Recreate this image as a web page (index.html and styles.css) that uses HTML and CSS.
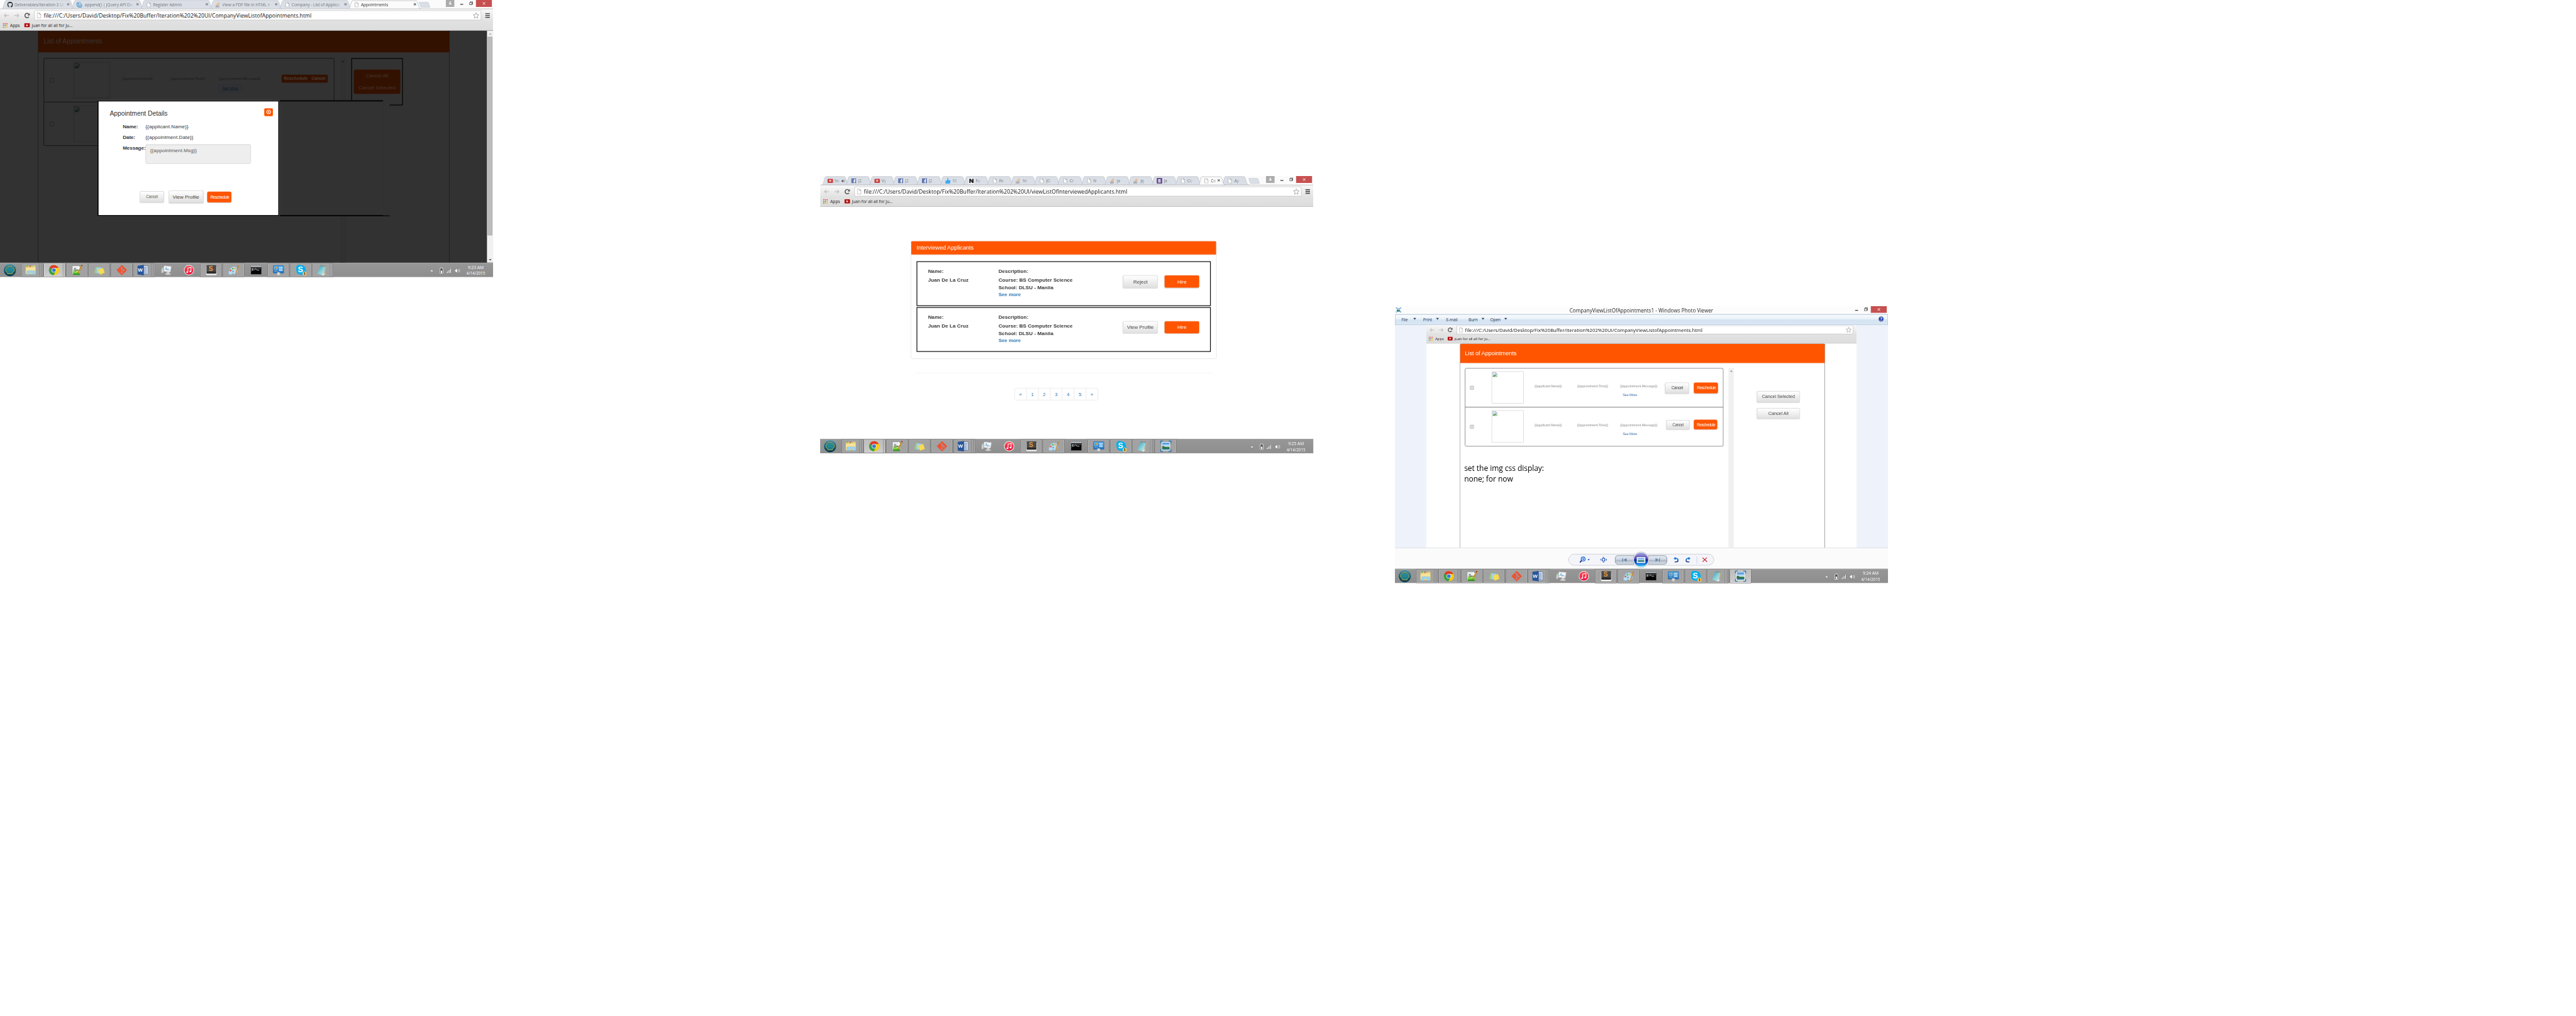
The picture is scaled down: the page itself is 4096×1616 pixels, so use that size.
FILE: index.html
```html
<!DOCTYPE html>
<html lang="en">
<head>
<meta charset="utf-8">
<title>Appointments screens</title>
<link rel="stylesheet" href="styles.css">
</head>
<body>
<svg class="defs" width="0" height="0" aria-hidden="true">
  <defs>
    <linearGradient id="gOrb" x1="0" y1="0" x2="0" y2="1"><stop offset="0" stop-color="#5b97a8"/><stop offset=".5" stop-color="#135a70"/><stop offset="1" stop-color="#062f42"/></linearGradient>
    <linearGradient id="gNpp" x1="0" y1="0" x2="0" y2="1"><stop offset="0" stop-color="#f4ffe8"/><stop offset=".5" stop-color="#8ee24a"/><stop offset="1" stop-color="#128a12"/></linearGradient>
    <linearGradient id="gBlue" x1="0" y1="0" x2="0" y2="1"><stop offset="0" stop-color="#4fa9ea"/><stop offset="1" stop-color="#1d6fc0"/></linearGradient>
    <linearGradient id="gRed" x1="0" y1="0" x2="0" y2="1"><stop offset="0" stop-color="#ff4e54"/><stop offset="1" stop-color="#e8143f"/></linearGradient>
    <linearGradient id="gNote" x1="0" y1="0" x2="1" y2="1"><stop offset="0" stop-color="#2f97ab"/><stop offset=".55" stop-color="#8fd0da"/><stop offset="1" stop-color="#d8f2f5"/></linearGradient>
    <linearGradient id="gPlay" x1="0" y1="0" x2="0" y2="1"><stop offset="0" stop-color="#a9a6dc"/><stop offset=".45" stop-color="#4a43b0"/><stop offset=".5" stop-color="#0a1a8f"/><stop offset=".75" stop-color="#0a63d0"/><stop offset="1" stop-color="#5fe0ff"/></linearGradient>
    <linearGradient id="gRot" x1="0" y1="0" x2="0" y2="1"><stop offset="0" stop-color="#0a7be0"/><stop offset="1" stop-color="#1f2a8c"/></linearGradient>
    <linearGradient id="gSky" x1="0" y1="0" x2="0" y2="1"><stop offset="0" stop-color="#2f86d8"/><stop offset=".5" stop-color="#d5effb"/><stop offset=".62" stop-color="#4d8f5a"/><stop offset=".75" stop-color="#1d5f6a"/><stop offset="1" stop-color="#3f9fd0"/></linearGradient>
  </defs>
  <symbol id="tab-wide" viewBox="0 0 202 24"><path d="M0 23.5 Q2 23 3 20 L8 4 Q9 1.3 11.5 1.3 H186 Q189 1.3 190 4 L195 20 Q196 23.5 200 23.5 V24 H0Z"/></symbol>
  <symbol id="tab-slim" viewBox="0 0 76 24"><path d="M0 23.5 Q2 23 3 20 L7 4 Q8 1.3 11 1.3 H60 Q63 1.3 64 4 L69 20 Q70 23.5 74 23.5 V24 H0Z"/></symbol>
  <symbol id="tab-new" viewBox="0 0 32 17"><path d="M1 1.5 Q2 .6 4 .6 H24 Q26 .6 27 3 L31 14 Q31.5 16 29 16 H8 Q6 16 5 14Z" fill="#dadfe7" stroke="#c4c9cf"/></symbol>
  <symbol id="page" viewBox="0 0 12 16"><path d="M.6 1 H7.5 L11.3 5 V15.3 H.6Z M7.5 1 V5 H11.3" fill="#fbfbfb" stroke="#8f8f8f" stroke-width="1.1"/></symbol>
  <symbol id="github" viewBox="0 0 16 16"><path fill="#333" d="M8 0C3.58 0 0 3.58 0 8c0 3.54 2.29 6.53 5.47 7.59.4.07.55-.17.55-.38 0-.19-.01-.82-.01-1.49-2.01.37-2.53-.49-2.69-.94-.09-.23-.48-.94-.82-1.13-.28-.15-.68-.52-.01-.53.63-.01 1.08.58 1.23.82.72 1.21 1.87.87 2.33.66.07-.52.28-.87.51-1.07-1.78-.2-3.64-.89-3.64-3.95 0-.87.31-1.59.82-2.15-.08-.2-.36-1.02.08-2.12 0 0 .67-.21 2.2.82a7.6 7.6 0 0 1 4 0c1.53-1.04 2.2-.82 2.2-.82.44 1.1.16 1.92.08 2.12.51.56.82 1.27.82 2.15 0 3.07-1.87 3.75-3.65 3.95.29.25.54.73.54 1.48 0 1.07-.01 1.93-.01 2.2 0 .21.15.46.55.38A8.01 8.01 0 0 0 16 8c0-4.42-3.58-8-8-8z"/></symbol>
  <symbol id="jquery" viewBox="0 0 16 16"><g fill="none" stroke="#3c8fc9" stroke-linecap="round"><path d="M2.2 2.5C-1 8 2 14.8 9 15c3 0 5-1.200 6-2.500" stroke-width="2.200"/><path d="M5.500 1.500C3.500 6 6 10.800 10.500 11c2 0 3.500-1 4-2" stroke-width="1.900"/><path d="M9.500 1C8.500 4 9.500 7 12.500 7.200c1.200 0 2-.7 2.300-1.200" stroke-width="1.600"/></g></symbol>
  <symbol id="so" viewBox="0 0 14 16"><path d="M1.500 9.500V15h9V9.500" fill="none" stroke="#9a9a9a" stroke-width="1.200"/><path d="M3 13h6M3 11h6" stroke="#888" stroke-width="1.200"/><path d="M3.200 8.500l6 1M4.200 5.600l5.600 2.700M6.400 3l4.500 4.300M9.500 1l2.600 5.600" stroke="#f29a4f" stroke-width="1.300"/></symbol>
  <symbol id="yt" viewBox="0 0 16 12"><rect width="16" height="12" rx="2.200" fill="#b8120f"/><path d="M6 3v6l5-3z" fill="#fff"/></symbol>
  <symbol id="ytt" viewBox="0 0 16 12"><rect width="16" height="12" rx="2.200" fill="#cb4441"/><path d="M6 3v6l5-3z" fill="#fff"/></symbol>
  <symbol id="fb" viewBox="0 0 14 14"><path d="M0 0h14v14H0z" fill="#6076b0"/><path d="M9.800 14V8.700h1.900l.3-2.100H9.800V5.400c0-.7.300-1 1-1H12V2.300h-1.700C8.300 2.300 7.500 3.500 7.500 5.100v1.500H5.900v2.100h1.600V14z" fill="#fff"/></symbol>
  <symbol id="thumb" viewBox="0 0 14 16"><path d="M0 7.500h3.500L5.500 5V1q0-1 1.200-1T8 1.500V6h4.500Q14 6.200 13.800 8l-.8 6q-.3 1.500-1.800 1.500H0z" fill="#3da9f5"/></symbol>
  <symbol id="nine" viewBox="0 0 16 16"><path d="M0 0h16v16H0z" fill="#fff"/><path d="M2 14V2h4l4 6.500V2h4v12h-4L6 7.500V14z" fill="#222"/></symbol>
  <symbol id="boot" viewBox="0 0 16 16"><rect width="16" height="16" rx="2.500" fill="#6e5494"/><path d="M5 3.500h4a2.200 2.200 0 0 1 .8 4.200A2.500 2.500 0 0 1 9.300 12.500H5zM7 5.200v1.900h1.600a.95.95 0 0 0 0-1.900zM7 8.700v2.100h1.900a1 1 0 0 0 0-2.100z" fill="#fff" fill-rule="evenodd"/></symbol>
  <symbol id="speaker-s" viewBox="0 0 10 9"><path d="M0 3h2l3-3v9L2 6H0z" fill="#555"/><path d="M6.500 2q1.500 2.500 0 5M8.300.8q2.200 3.700 0 7.400" fill="none" stroke="#777"/></symbol>
  <symbol id="back" viewBox="0 0 15 12"><path d="M7 1L2 6l5 5M2 6h13" fill="none" stroke="#c2c2c2" stroke-width="2.200"/></symbol>
  <symbol id="fwd" viewBox="0 0 15 12"><path d="M8 1l5 5-5 5M13 6H0" fill="none" stroke="#c2c2c2" stroke-width="2.200"/></symbol>
  <symbol id="reload" viewBox="0 0 16 16"><path d="M13 11.500A6 6 0 1 1 12.500 4" fill="none" stroke="#4d4d4d" stroke-width="2.500"/><path d="M15.500 1v6.500H9z" fill="#4d4d4d"/></symbol>
  <symbol id="star" viewBox="0 0 18 18"><path d="M9 1l2.300 5.400 5.700.4-4.400 3.800 1.400 5.900L9 13.400l-5 3.100 1.400-5.900L1 6.800l5.700-.4z" fill="#fff" stroke="#888" stroke-width="1.200"/></symbol>
  <symbol id="menu" viewBox="0 0 13 14"><path d="M1 1.500h11M1 6.700h11M1 12h11" stroke="#4b4b4b" stroke-width="2.900" stroke-linecap="round"/></symbol>
  <symbol id="apps" viewBox="0 0 13 13"><path d="M0 0h3v3H0zM5 0h3v3H5zM10 0h3v3h-3z" fill="#e8453c"/><path d="M0 5h3v3H0z" fill="#2da94f"/><path d="M5 5h3v3H5z" fill="#3b78e7"/><path d="M10 5h3v3h-3z" fill="#f4b400"/><path d="M0 10h3v3H0z" fill="#2da94f"/><path d="M5 10h3v3H5zM10 10h3v3h-3z" fill="#f4b400"/></symbol>
  <symbol id="user" viewBox="0 0 24 19"><path d="M0 0h24v19H0z" fill="#ababab"/><circle cx="12" cy="6" r="2" fill="#fff"/><path d="M8 12q0-3.500 4-3.500t4 3.500z" fill="#fff"/></symbol>
  <symbol id="restore" viewBox="0 0 10 10"><path d="M.75 3.200h6.500v6H.75zM2.700 2.500V.7H9.300v7H8" fill="none" stroke="#222" stroke-width="1.300"/></symbol>
  <symbol id="close" viewBox="0 0 45 19"><path d="M0 0h45v19H0z" fill="#c75050"/><path d="M19.500 6l6.500 7M26 6l-6.500 7" stroke="#fff" stroke-width="1.600"/></symbol>
  <symbol id="broken" viewBox="0 0 16 16"><path d="M.5 .5h9L15.500 6v4L12 13l-2 2.500H.5z" fill="#c5d5f2" stroke="#a0a0a0"/><path d="M2 6.500q1-2.500 3-2 1-2 2.500 0 2 0 2 2z" fill="#fff"/><path d="M1.500 14.500Q5 8 9 8.500L12 10l-3.500 4.500z" fill="#57a83c"/><path d="M11 15.500l4.500-4v4z" fill="#57a83c"/><path d="M9.500.5V6h6z" fill="#eee" stroke="#a0a0a0"/></symbol>
  <symbol id="broken-dim" viewBox="0 0 16 16"><path d="M.5 .5h9L15.500 6v4L12 13l-2 2.500H.5z" fill="#282b31" stroke="#1e1e1e"/><path d="M2 6.500q1-2.500 3-2 1-2 2.500 0 2 0 2 2z" fill="#353535"/><path d="M1.500 14.500Q5 8 9 8.500L12 10l-3.500 4.500z" fill="#102108"/><path d="M9.500.5V6h6z" fill="#303030" stroke="#1e1e1e"/></symbol>

  <symbol id="t-orb" viewBox="0 0 38 38"><circle cx="19" cy="19" r="18" fill="url(#gOrb)" stroke="#8db4be" stroke-width="1"/><path d="M12 29.500v-2.500q-6-4-5.500-9.500Q7.500 13 11 12q2-3.500 5-3 3-2 6 0 3-.5 5 3 3.500 1 4.500 5.500.5 5.500-5.500 9.500v2.500z" fill="#1f7f8c" stroke="#c9a83f" stroke-width="1.700"/><path d="M13 22a6.500 6.500 0 0 1 12 0M10.500 19a9 9 0 0 1 17 0" fill="none" stroke="#37a3ac" stroke-width="1.300"/></symbol>
  <symbol id="t-folder" viewBox="0 0 34 32"><path d="M2 5V3q0-1 1-1h6l2 2h11l1-2h6q2 0 2 2v24H2z" fill="#e9cf77"/><path d="M4 2h4v3H4z" fill="#3aa845"/><path d="M13 3h3v3h-3z" fill="#c0392b"/><path d="M21 5h4v3h-4z" fill="#3e8fd0"/><path d="M1 8h17l1.500-2H31v22H1z" fill="#f6e39c" stroke="#d8bb5f" stroke-width=".6"/><path d="M5 31V20q0-2 2-2h20q2 0 2 2v11h-5v-6H10v6z" fill="#9fd6f2" stroke="#5ea9d2" stroke-width=".8"/></symbol>
  <symbol id="t-chrome" viewBox="0 0 32 32"><circle cx="16" cy="16" r="14.500" fill="#fc0"/><path d="M16 16L3.500 8.700A14.500 14.500 0 0 1 28.900 9.500H16z" fill="#e0392f"/><path d="M3.400 8.700A14.500 14.500 0 0 0 15 30.500L21.500 19 10.500 19.500z" fill="#37a04a"/><path d="M3.400 8.700l6.800 10.500L16 9.500h12.800" fill="#e0392f"/><path d="M3.400 8.700L10 19.800 16 16z" fill="#37a04a"/><circle cx="16" cy="16" r="6.600" fill="#fff"/><circle cx="16" cy="16" r="5.300" fill="#3a78d0"/></symbol>
  <symbol id="t-npp" viewBox="0 0 32 32"><path d="M2.500 3H20l5 4.500V30H2.500z" fill="#fff" stroke="#777"/><path d="M4 4h15v8H4z" fill="#e4ecef"/><path d="M4 14h20v15.500H4z" fill="url(#gNpp)"/><path d="M3 2.500h16" stroke="#888" stroke-dasharray="1 1" stroke-width="2"/><path d="M8 20v-8q2-3 4 0v8M14 16h4M16 14v4M19.500 16h4M21.500 14v4" fill="none" stroke="#111" stroke-width="1.300"/><path d="M28.500 1l3 1.500L20.500 24l-3 2.500.5-4z" fill="#e9a32c" stroke="#7a4b12" stroke-width=".6"/><path d="M28.500 1l3 1.500-1.300 2.600-3-1.500z" fill="#9c2d2d"/></symbol>
  <symbol id="t-sticky" viewBox="0 0 34 30"><path d="M7 4l14 6-4 16L1 23z" fill="#9bd46b"/><path d="M8 7h15v18H8z" fill="#a8d4f5" stroke="#7fb2de" stroke-width=".6"/><path d="M12.500 14L28 8l5 15-15 6z" fill="#f7dc55" stroke="#d9b93a" stroke-width=".6"/></symbol>
  <symbol id="t-git" viewBox="0 0 34 34"><path d="M17 1L33 17 17 33 1 17z" fill="#f05133"/><path d="M13 6l4 5v15M17 12l6 6" fill="none" stroke="#a59a96" stroke-width="2"/><g fill="#a59a96"><circle cx="17" cy="11.500" r="2.300"/><circle cx="23" cy="18" r="2.300"/><circle cx="17" cy="25" r="2.300"/></g></symbol>
  <symbol id="t-word" viewBox="0 0 32 32"><path d="M15 4h15.500v24H15z" fill="#fff" stroke="#2a5699"/><path d="M18 8h10M18 11.500h10M18 15h10M18 18.500h10M18 22h10M18 25.500h10" stroke="#2a5699" stroke-width="1.400"/><path d="M1 3.500L19 1v30L1 28.500z" fill="#2a5699"/></symbol>
  <symbol id="t-monitor" viewBox="0 0 32 32"><path d="M1 10l6-3v16l-6 2z" fill="#d5d5d5" stroke="#888" stroke-width=".7"/><path d="M2 11h2v2H2z" fill="#2fc22f"/><path d="M8 3l22 2-3 17-20-2z" fill="#e9e9e9" stroke="#a0a0a0"/><path d="M10 6l17 1.500-2 12-16-1.500z" fill="#f6fbff"/><path d="M10 15l3-1 2-6 2 9 3-5 2 4 3-1" fill="none" stroke="#3d85c0" stroke-width="1.300"/><ellipse cx="20" cy="27" rx="8" ry="3" fill="#c6c6c6"/><path d="M17 21h6v5h-6z" fill="#dcdcdc"/></symbol>
  <symbol id="t-itunes" viewBox="0 0 32 32"><circle cx="16" cy="16" r="14.500" fill="#f4f4f4" stroke="#bbb" stroke-width=".6"/><circle cx="16" cy="16" r="12.800" fill="url(#gRed)"/><path d="M12.800 21.500V10l9-2v11.500" fill="none" stroke="#fff" stroke-width="1.900"/><ellipse cx="11" cy="21.800" rx="2.600" ry="2.100" fill="#fff"/><ellipse cx="20" cy="19.800" rx="2.600" ry="2.100" fill="#fff"/></symbol>
  <symbol id="t-sublime" viewBox="0 0 32 32"><path d="M2 5q-1 0-1 2v20q0 3 3 3h24q3 0 3-3V7q0-2-2-2z" fill="#f3f3f3"/><path d="M4 2h24q2 0 2 2v21H2V4q0-2 2-2z" fill="#4a4a4a"/><path d="M3 20h26v5q0 1-1 1H4q-1 0-1-1z" fill="#2b2b2b"/></symbol>
  <symbol id="t-paint" viewBox="0 0 32 32"><path d="M15 6Q27 5 28 16q0 7-5 11-4 3-6 1-1-3-4-2Q9 31 3 28q-4-3-1-8Q5 8 15 6z" fill="#b9dcf2" stroke="#7fb3d6"/><circle cx="13" cy="12" r="2.600" fill="#5cb85c"/><circle cx="20" cy="11" r="2.500" fill="#f0ad2e"/><circle cx="7" cy="17" r="2.600" fill="#e2574c"/><circle cx="14" cy="20" r="2.400" fill="#7f9fb5"/><path d="M26 8l3 1.500L21 31l-1-.5z" fill="#e69a3c" stroke="#b36f22" stroke-width=".8"/><path d="M26 8q0-5 6-7 0 6-3 8.500z" fill="#b98a5a"/></symbol>
  <symbol id="t-cmd" viewBox="0 0 32 26"><path d="M1 1h30v24H1z" fill="#050505" stroke="#777" stroke-width=".6"/><path d="M1 1h30v3H1z" fill="#c9d3df"/><path d="M1 4h30v6Q10 10 1 18z" fill="#333"/><path d="M8 9H5v4h3M11 10v1M11 12v1M14 8l3 5M18 13h7" fill="none" stroke="#fff" stroke-width="1.300"/></symbol>
  <symbol id="t-control" viewBox="0 0 34 32"><rect x="1" y="2" width="32" height="23" rx="1.500" fill="url(#gBlue)" stroke="#17599d"/><circle cx="9" cy="11" r="4.800" fill="#3f95db" stroke="#cde6f8"/><path d="M9 11V5.500A5.500 5.500 0 0 1 14.500 11z" fill="#f3a32f"/><path d="M19 7h10v4H19zM19 14h10v4H19z" fill="#8fcdf5" stroke="#e9f6ff"/><circle cx="7" cy="20" r="1.300" fill="#f5c04f"/><circle cx="12" cy="20" r="1.300" fill="#f5c04f"/><circle cx="17" cy="27" r="5" fill="#d6d6d6" stroke="#8d8d8d" stroke-width=".6"/></symbol>
  <symbol id="t-skype" viewBox="0 0 32 32"><path d="M9 1q5-.5 7 1 13 0 14 13.500 2 8-2 12-4 4-11 1.500Q3 29 3 16 .5 3 9 1z" fill="#00aff0"/><circle cx="26.500" cy="26" r="5.300" fill="#f8b62c" stroke="#fff4d8" stroke-width="1"/></symbol>
  <symbol id="t-notepad" viewBox="0 0 32 32"><path d="M12 4l17 2-4 23-6 2z" fill="#c2a572"/><path d="M12 3l15 2-6 26L2 26z" fill="url(#gNote)"/><path d="M17 30l10-6-6 7z" fill="#f4fbfc"/><path d="M12 3l15 2" stroke="#777" stroke-width="3" stroke-dasharray="1.200 1.200"/></symbol>
  <symbol id="t-photo" viewBox="0 0 32 32"><path d="M1 8V1h7M24 1h7v7M31 24v7h-7M8 31H1v-7" fill="none" stroke="#2c77b8" stroke-width="3"/><path d="M4 4h24v24H4z" fill="#fff"/><path d="M5.500 5.500h21v21h-21z" fill="url(#gSky)"/><path d="M5.500 15q6 0 9 4l12 1v3h-21z" fill="#2f6f45"/></symbol>
  <symbol id="tray" viewBox="0 0 86 24"><path d="M1 14.500L6 9l5 5.500z" fill="#f2f2f8" stroke="#67677a" stroke-width=".8"/><path d="M29 5.500h2V4h4v1.500h2v14h-8z" fill="#555" stroke="#fff" stroke-width="1.200"/><path d="M31.200 12h3.600v6h-3.600z" fill="#fff"/><path d="M46.500 18v-2M49.500 18v-4M52.500 18v-6.500M55.500 18V9M58.500 18V6" stroke="#444" stroke-width="3.400"/><path d="M46.500 18v-2M49.500 18v-4M52.500 18v-6.500M55.500 18V9M58.500 18V6" stroke="#fff" stroke-width="2"/><path d="M70 9h2.500L77 5v14l-4.500-4H70z" fill="#fff" stroke="#444" stroke-width=".7"/><path d="M79.500 9q1.500 3 0 6M82 7q3 5 0 10" fill="none" stroke="#eee" stroke-width="1.200"/></symbol>
  <symbol id="help" viewBox="0 0 18 18"><circle cx="9" cy="9" r="8.200" fill="#aab4c8" stroke="#6b7890" stroke-width=".8"/><circle cx="9" cy="9" r="6.500" fill="#2340b8"/></symbol>
  <symbol id="v-zoom" viewBox="0 0 18 18"><circle cx="10.500" cy="7" r="5.500" fill="#fff" stroke="#0f5fd6" stroke-width="2.200"/><path d="M10.500 4v6M7.500 7h6" stroke="#0f5fd6" stroke-width="1.800"/><path d="M6.500 11L1.500 16.500" stroke="#1f2a8c" stroke-width="3"/></symbol>
  <symbol id="v-fit" viewBox="0 0 18 16"><path d="M5.500 4.500h7v7h-7z" fill="#fff" stroke="#1450b8" stroke-width="2"/><path d="M9 3L6.500 0h5zM9 13l-2.500 3h5zM3 8L0 5v6zM15 8l3-3v6z" fill="#1c3fa0"/></symbol>
  <symbol id="v-prev" viewBox="0 0 14 12"><path d="M1.500 0v12" stroke="#6c87b4" stroke-width="2.600"/><path d="M13.500 0v12L4 6z" fill="#6c87b4"/></symbol>
  <symbol id="v-next" viewBox="0 0 14 12"><path d="M12.500 0v12" stroke="#6c87b4" stroke-width="2.600"/><path d="M.5 0v12L10 6z" fill="#6c87b4"/></symbol>
  <symbol id="v-ccw" viewBox="0 0 14 16"><path d="M4 4.500h3.500a4.800 4.800 0 0 1 0 9.600H3" fill="none" stroke="url(#gRot)" stroke-width="2.800"/><path d="M6 0v9L0 4.500z" fill="#0a70dc"/></symbol>
  <symbol id="v-cw" viewBox="0 0 14 16"><path d="M10 4.500H6.500a4.800 4.800 0 0 0 0 9.600H11" fill="none" stroke="url(#gRot)" stroke-width="2.800"/><path d="M8 0v9l6-4.500z" fill="#0a70dc"/></symbol>
  <symbol id="v-del" viewBox="0 0 15 14"><path d="M1 1l13 12M13 1L1.500 13" stroke="#cc1f1f" stroke-width="2"/></symbol>
  <symbol id="v-play" viewBox="0 0 46 48"><circle cx="23" cy="24" r="22" fill="#f3f4f8" stroke="#a9adb8"/><circle cx="23" cy="24" r="19.500" fill="url(#gPlay)"/><path d="M12 17h22q1 0 1 1v14q0 1-1 1H12q-1 0-1-1V18q0-1 1-1z" fill="#f2f7fb"/><path d="M14 20h18v10H14z" fill="url(#gSky)"/></symbol>
</svg>

<main class="frame">
<div class="canvas">

<!-- Screen 1: appointment details dialog -->
<section class="desktop one">
  <header class="tabstrip">
    <div class="tab"><svg class="shape"><use href="#tab-wide"/></svg><svg class="fav"><use href="#github"/></svg><span class="tt">Deliverables/Iteration 2 UI</span><i class="x">×</i></div>
    <div class="tab"><svg class="shape"><use href="#tab-wide"/></svg><svg class="fav"><use href="#jquery"/></svg><span class="tt">.append() | jQuery API Doc</span><i class="x">×</i></div>
    <div class="tab"><svg class="shape"><use href="#tab-wide"/></svg><svg class="fav doc"><use href="#page"/></svg><span class="tt">Register Admin</span><i class="x">×</i></div>
    <div class="tab"><svg class="shape"><use href="#tab-wide"/></svg><svg class="fav so"><use href="#so"/></svg><span class="tt">View a PDF file in HTML n</span><i class="x">×</i></div>
    <div class="tab"><svg class="shape"><use href="#tab-wide"/></svg><svg class="fav doc"><use href="#page"/></svg><span class="tt">Company - List of Applica</span><i class="x">×</i></div>
    <div class="tab active"><svg class="shape"><use href="#tab-wide"/></svg><svg class="fav doc"><use href="#page"/></svg><span class="tt">Appointments</span><i class="x">×</i></div>
    <svg class="newtab"><use href="#tab-new"/></svg>
    <div class="controls"><svg class="c-user"><use href="#user"/></svg><i class="c-min"></i><svg class="c-res"><use href="#restore"/></svg><svg class="c-close"><use href="#close"/></svg></div>
  </header>
  <div class="toolbar">
    <div class="nav"><svg class="n-back"><use href="#back"/></svg><svg class="n-fwd"><use href="#fwd"/></svg><svg class="n-rel"><use href="#reload"/></svg>
      <div class="omni"><svg class="o-doc"><use href="#page"/></svg><span class="url">file:///C:/Users/David/Desktop/Fix%20Buffer/Iteration%202%20UI/CompanyViewListofAppointments.html</span><svg class="o-star"><use href="#star"/></svg></div>
      <svg class="n-menu"><use href="#menu"/></svg></div>
    <div class="marks"><svg class="m-apps"><use href="#apps"/></svg><span>Apps</span><svg class="m-yt"><use href="#yt"/></svg><span>juan for all all for ju...</span></div>
  </div>
  <div class="page1">
    <div class="panel1">
      <h1 class="ph1">List of Appointments</h1>
      <div class="pb1">
        <div class="list1">
          <div class="row1"><i class="chk"></i><div class="pic"><svg><use href="#broken-dim"/></svg></div><span class="cell c1">{{applicant.Name}}</span><span class="cell c2">{{appointment.Time}}</span><div class="cell c3">{{appointment.Message}}<a class="more">See More</a></div><div class="pair"><span class="p-res">Reschedule</span><span class="p-can">Cancel</span></div></div>
          <div class="row1 last"><i class="chk"></i><div class="pic"><svg><use href="#broken-dim"/></svg></div></div>
        </div>
        <div class="sb1"><i class="up"></i></div>
        <div class="side1"><div class="side1b"><span>Cancel All</span><span>Cancel Selected</span></div></div>
      </div>
    </div>
    <div class="scroll"><i class="up"></i><div class="thumb"></div><i class="down"></i></div>
    <div class="shade"></div>
    <div class="shade-tail"></div>
    <div class="modal">
      <div class="mhead"><h2>Appointment Details</h2><span class="mx"><svg viewBox="0 0 14 14"><circle cx="7" cy="7" r="5.200" fill="none" stroke="#fff" stroke-width="1.800"/><path d="M5 5l4 4M9 5L5 9" stroke="#fff" stroke-width="1.700"/></svg></span></div>
      <dl class="fields"><dt>Name:</dt><dd>{{applicant.Name}}</dd><dt>Date:</dt><dd>{{appointment.Date}}</dd><dt>Message:</dt><dd class="msg">{{appointment.Msg}}</dd></dl>
      <div class="mbtns"><span class="btn m-can">Cancel</span><span class="btn m-view">View Profile</span><span class="btn hot m-res">Reschedule</span></div>
    </div>
  </div>
  <footer class="taskbar">
    <svg class="orb"><use href="#t-orb"/></svg>
    <div class="task stack"><svg><use href="#t-folder"/></svg></div><div class="task stack2 on"><svg><use href="#t-chrome"/></svg></div><div class="task"><svg><use href="#t-npp"/></svg></div><div class="task"><svg><use href="#t-sticky"/></svg></div><div class="task"><svg><use href="#t-git"/></svg></div><div class="task stack"><svg><use href="#t-word"/></svg><b class="w">W</b></div><div class="task plain"><svg><use href="#t-monitor"/></svg></div><div class="task plain"><svg><use href="#t-itunes"/></svg></div><div class="task"><svg><use href="#t-sublime"/></svg><b class="s">S</b></div><div class="task"><svg><use href="#t-paint"/></svg></div><div class="task plain"><svg><use href="#t-cmd"/></svg></div><div class="task"><svg><use href="#t-control"/></svg></div><div class="task"><svg><use href="#t-skype"/></svg><b class="k">S</b><b class="n">1</b></div><div class="task stack"><svg><use href="#t-notepad"/></svg></div>
    <svg class="tray"><use href="#tray"/></svg><div class="clock"><span>9:23 AM</span><span>4/14/2015</span></div>
  </footer>
</section>

<!-- Screen 2: interviewed applicants -->
<section class="desktop two">
  <header class="tabstrip">
    <div class="tab slim"><svg class="shape"><use href="#tab-slim"/></svg><svg class="fav yt"><use href="#ytt"/></svg><span class="tt">No</span><svg class="snd"><use href="#speaker-s"/></svg></div>
    <div class="tab slim"><svg class="shape"><use href="#tab-slim"/></svg><svg class="fav fb"><use href="#fb"/></svg><span class="tt">(2</span></div>
    <div class="tab slim"><svg class="shape"><use href="#tab-slim"/></svg><svg class="fav yt"><use href="#ytt"/></svg><span class="tt">Vy</span></div>
    <div class="tab slim"><svg class="shape"><use href="#tab-slim"/></svg><svg class="fav fb"><use href="#fb"/></svg><span class="tt">(2</span></div>
    <div class="tab slim"><svg class="shape"><use href="#tab-slim"/></svg><svg class="fav fb"><use href="#fb"/></svg><span class="tt">(2</span></div>
    <div class="tab slim"><svg class="shape"><use href="#tab-slim"/></svg><svg class="fav"><use href="#thumb"/></svg><span class="tt">10</span></div>
    <div class="tab slim"><svg class="shape"><use href="#tab-slim"/></svg><svg class="fav"><use href="#nine"/></svg><span class="tt">Fu</span></div>
    <div class="tab slim"><svg class="shape"><use href="#tab-slim"/></svg><svg class="fav doc"><use href="#page"/></svg><span class="tt">Re</span></div>
    <div class="tab slim"><svg class="shape"><use href="#tab-slim"/></svg><svg class="fav so"><use href="#so"/></svg><span class="tt">ht</span></div>
    <div class="tab slim"><svg class="shape"><use href="#tab-slim"/></svg><svg class="fav doc"><use href="#page"/></svg><span class="tt">JO</span></div>
    <div class="tab slim"><svg class="shape"><use href="#tab-slim"/></svg><svg class="fav doc"><use href="#page"/></svg><span class="tt">Cr</span></div>
    <div class="tab slim"><svg class="shape"><use href="#tab-slim"/></svg><svg class="fav doc"><use href="#page"/></svg><span class="tt">N</span></div>
    <div class="tab slim"><svg class="shape"><use href="#tab-slim"/></svg><svg class="fav so"><use href="#so"/></svg><span class="tt">ja</span></div>
    <div class="tab slim"><svg class="shape"><use href="#tab-slim"/></svg><svg class="fav so"><use href="#so"/></svg><span class="tt">jq</span></div>
    <div class="tab slim"><svg class="shape"><use href="#tab-slim"/></svg><svg class="fav"><use href="#boot"/></svg><span class="tt">Ja</span></div>
    <div class="tab slim"><svg class="shape"><use href="#tab-slim"/></svg><svg class="fav doc"><use href="#page"/></svg><span class="tt">Co</span></div>
    <div class="tab slim active"><svg class="shape"><use href="#tab-slim"/></svg><svg class="fav doc"><use href="#page"/></svg><span class="tt">Co</span><i class="x">×</i></div>
    <div class="tab slim"><svg class="shape"><use href="#tab-slim"/></svg><svg class="fav doc"><use href="#page"/></svg><span class="tt">Ap</span></div>
    <svg class="newtab"><use href="#tab-new"/></svg>
    <div class="controls"><svg class="c-user"><use href="#user"/></svg><i class="c-min"></i><svg class="c-res"><use href="#restore"/></svg><svg class="c-close"><use href="#close"/></svg></div>
  </header>
  <div class="toolbar">
    <div class="nav"><svg class="n-back"><use href="#back"/></svg><svg class="n-fwd"><use href="#fwd"/></svg><svg class="n-rel"><use href="#reload"/></svg>
      <div class="omni"><svg class="o-doc"><use href="#page"/></svg><span class="url">file:///C:/Users/David/Desktop/Fix%20Buffer/Iteration%202%20UI/viewListOfInterviewedApplicants.html</span><svg class="o-star"><use href="#star"/></svg></div>
      <svg class="n-menu"><use href="#menu"/></svg></div>
    <div class="marks"><svg class="m-apps"><use href="#apps"/></svg><span>Apps</span><svg class="m-yt"><use href="#yt"/></svg><span>juan for all all for ju...</span></div>
  </div>
  <div class="page2">
    <div class="panel2">
      <h1 class="ph2">Interviewed Applicants</h1>
      <div class="pb2">
        <div class="app"><div class="who"><p>Name:</p><p class="v">Juan De La Cruz</p></div><div class="desc"><p>Description:</p><p class="v">Course: BS Computer Science</p><p class="sch">School: DLSU - Manila</p><a>See more</a></div><span class="btn">Reject</span><span class="btn hot">Hire</span></div>
        <div class="app"><div class="who"><p>Name:</p><p class="v">Juan De La Cruz</p></div><div class="desc"><p>Description:</p><p class="v">Course: BS Computer Science</p><p class="sch">School: DLSU - Manila</p><a>See more</a></div><span class="btn">View Profile</span><span class="btn hot">Hire</span></div>
      </div>
    </div>
    <hr>
    <nav class="pager"><a>«</a><a>1</a><a>2</a><a>3</a><a>4</a><a>5</a><a>»</a></nav>
  </div>
  <footer class="taskbar">
    <svg class="orb"><use href="#t-orb"/></svg>
    <div class="task stack"><svg><use href="#t-folder"/></svg></div><div class="task stack2 on"><svg><use href="#t-chrome"/></svg></div><div class="task"><svg><use href="#t-npp"/></svg></div><div class="task"><svg><use href="#t-sticky"/></svg></div><div class="task"><svg><use href="#t-git"/></svg></div><div class="task stack"><svg><use href="#t-word"/></svg><b class="w">W</b></div><div class="task plain"><svg><use href="#t-monitor"/></svg></div><div class="task plain"><svg><use href="#t-itunes"/></svg></div><div class="task"><svg><use href="#t-sublime"/></svg><b class="s">S</b></div><div class="task"><svg><use href="#t-paint"/></svg></div><div class="task plain"><svg><use href="#t-cmd"/></svg></div><div class="task"><svg><use href="#t-control"/></svg></div><div class="task"><svg><use href="#t-skype"/></svg><b class="k">S</b><b class="n">1</b></div><div class="task stack"><svg><use href="#t-notepad"/></svg></div><div class="task"><svg><use href="#t-photo"/></svg></div>
    <svg class="tray"><use href="#tray"/></svg><div class="clock"><span>9:25 AM</span><span>4/14/2015</span></div>
  </footer>
</section>

<!-- Screen 3: photo viewer -->
<section class="desktop three">
  <header class="vtitle"><svg class="v-ico"><use href="#t-photo"/></svg><span>CompanyViewListOfAppointments1 - Windows Photo Viewer</span><div class="controls"><i class="c-min"></i><svg class="c-res"><use href="#restore"/></svg><svg class="c-close"><use href="#close"/></svg></div></header>
  <div class="vmenu"><span class="m1">File</span><i></i><span class="m2">Print</span><i></i><span class="m3">E-mail</span><span class="m4">Burn</span><i></i><span class="m5">Open</span><i></i><div class="help"><svg><use href="#help"/></svg><b>?</b></div></div>
  <div class="vbody">
    <div class="photo">
      <div class="shrunk"><div class="toolbar">
        <div class="nav"><svg class="n-back"><use href="#back"/></svg><svg class="n-fwd"><use href="#fwd"/></svg><svg class="n-rel"><use href="#reload"/></svg>
          <div class="omni"><svg class="o-doc"><use href="#page"/></svg><span class="url">file:///C:/Users/David/Desktop/Fix%20Buffer/Iteration%202%20UI/CompanyViewListofAppointments.html</span><svg class="o-star"><use href="#star"/></svg></div></div>
        <div class="marks"><svg class="m-apps"><use href="#apps"/></svg><span>Apps</span><svg class="m-yt"><use href="#yt"/></svg><span>juan for all all for ju...</span></div>
      </div></div>
      <div class="panel3">
        <h1 class="ph3">List of Appointments</h1>
        <div class="pb3">
          <div class="left3">
            <div class="list3">
              <div class="row3"><i class="chk"></i><div class="pic"><svg><use href="#broken"/></svg></div><span class="cell c1">{{applicant.Name}}</span><span class="cell c2">{{appointment.Time}}</span><div class="cell c3">{{appointment.Message}}<a class="more">See More</a></div><span class="btn can3">Cancel</span><span class="btn hot res3">Reschedule</span></div>
              <div class="row3 last"><i class="chk"></i><div class="pic"><svg><use href="#broken"/></svg></div><span class="cell c1">{{applicant.Name}}</span><span class="cell c2">{{appointment.Time}}</span><div class="cell c3">{{appointment.Message}}<a class="more">See More</a></div><span class="btn can3">Cancel</span><span class="btn hot res3">Reschedule</span></div>
            </div>
            <p class="note">set the img css display:<br>none; for now</p>
          </div>
          <div class="sb3"><i class="up"></i></div>
          <div class="side3"><span class="btn">Cancel Selected</span><span class="btn">Cancel All</span></div>
        </div>
      </div>
    </div>
  </div>
  <div class="vbar"><div class="pill"><svg class="z"><use href="#v-zoom"/></svg><i></i><svg class="fit"><use href="#v-fit"/></svg><span class="step prev"><svg><use href="#v-prev"/></svg></span><svg class="play"><use href="#v-play"/></svg><span class="step next"><svg><use href="#v-next"/></svg></span><svg class="ccw"><use href="#v-ccw"/></svg><svg class="cw"><use href="#v-cw"/></svg><s></s><svg class="del"><use href="#v-del"/></svg></div></div>
  <footer class="taskbar">
    <svg class="orb"><use href="#t-orb"/></svg>
    <div class="task stack"><svg><use href="#t-folder"/></svg></div><div class="task stack2"><svg><use href="#t-chrome"/></svg></div><div class="task"><svg><use href="#t-npp"/></svg></div><div class="task"><svg><use href="#t-sticky"/></svg></div><div class="task"><svg><use href="#t-git"/></svg></div><div class="task stack"><svg><use href="#t-word"/></svg><b class="w">W</b></div><div class="task plain"><svg><use href="#t-monitor"/></svg></div><div class="task plain"><svg><use href="#t-itunes"/></svg></div><div class="task"><svg><use href="#t-sublime"/></svg><b class="s">S</b></div><div class="task"><svg><use href="#t-paint"/></svg></div><div class="task plain"><svg><use href="#t-cmd"/></svg></div><div class="task"><svg><use href="#t-control"/></svg></div><div class="task"><svg><use href="#t-skype"/></svg><b class="k">S</b><b class="n">1</b></div><div class="task stack"><svg><use href="#t-notepad"/></svg></div><div class="task on"><svg><use href="#t-photo"/></svg></div>
    <svg class="tray"><use href="#tray"/></svg><div class="clock"><span>9:24 AM</span><span>4/14/2015</span></div>
  </footer>
</section>

</div>
</main>
</body>
</html>
```
FILE: styles.css
```css
* { box-sizing: border-box; margin: 0; padding: 0; }
html, body { background: #fff; }
i, s { font-style: normal; text-decoration: none; }
svg { display: block; flex: none; overflow: visible; }
.defs { position: absolute; }

/* Artboard: screens are laid out at their own pixel size, then scaled */
.frame { width: 4096px; height: 1616px; overflow: hidden; }
.canvas { position: relative; width: 5300px; height: 1700px; transform: scale(.574); transform-origin: 0 0; font-family: "Liberation Sans", Arial, sans-serif; color: #333; }
.desktop { position: absolute; width: 1366px; height: 768px; overflow: hidden; display: flex; flex-direction: column; background: #fff; }
.one { left: 0; top: 0; }
.two { left: 2272px; top: 488px; }
.three { left: 3864px; top: 848px; }

/* Browser chrome */
.tabstrip, .toolbar, .vtitle, .vmenu, .clock, .note { font-family: "Open Sans", "Noto Sans", sans-serif; }
.tabstrip { display: flex; height: 24px; padding-left: 6px; background: #fbfbfb; flex: none; }
.tab { position: relative; width: 192px; flex: none; height: 24px; padding-left: 14px; display: flex; align-items: center; font-size: 11.5px; color: #737679; }
.tab .shape { position: absolute; left: 0; top: 0; width: 202px; height: 24px; fill: #dadfe7; stroke: #b2b6bb; stroke-width: 1; }
.tab.active { z-index: 2; color: #333; }
.tab.active .shape { fill: #fbfbfb; stroke: #a5a8ac; height: 25px; }
.tab .fav { position: relative; width: 16px; height: 16px; margin-top: 2px; }
.tab .fav.doc { width: 12px; height: 14px; margin-left: 2px; margin-right: 2px; }
.tab .fav.so { width: 14px; margin-right: 2px; }
.tab .fav.yt { height: 12px; }
.tab .fav.fb { width: 14px; height: 14px; margin-left: 1px; margin-right: 1px; }
.tt { position: relative; width: 139px; margin-left: 4px; line-height: 20px; margin-top: 1px; letter-spacing: -.1px; white-space: nowrap; overflow: hidden; -webkit-mask-image: linear-gradient(90deg, #000 88%, transparent); mask-image: linear-gradient(90deg, #000 88%, transparent); }
.tab .x { position: relative; width: 14px; margin-left: 3px; text-align: center; font-size: 16px; font-weight: 700; line-height: 20px; color: #77797c; }
.tab.active .x { color: #555; }
.tab.slim { width: 65.150px; }
.slim .shape { width: 76px; }
.slim .tt { width: 14px; -webkit-mask-image: linear-gradient(90deg, #000 40%, rgba(0,0,0,.25)); mask-image: linear-gradient(90deg, #000 40%, rgba(0,0,0,.25)); }
.slim .snd { position: relative; width: 10px; height: 9px; margin: 2px 0 0 5px; }
.slim .x { margin-left: 1px; }
.newtab { width: 32px; height: 17px; margin: 5px 0 0 2px; }
.two .newtab { margin-left: 7px; }
.controls { margin-left: auto; margin-right: 3px; display: flex; align-items: flex-start; }
.c-user { width: 24px; height: 19px; }
.c-min { width: 8px; height: 2px; margin: 11px 0 0 16px; background: #222; }
.c-res { width: 10px; height: 10px; margin: 4px 0 0 17px; }
.c-close { width: 45px; height: 19px; margin-left: 8px; }
.toolbar { height: 61px; flex: none; border-top: 1px solid #9c9fa3; border-bottom: 1px solid #a0a0a0; background: linear-gradient(#f9f9f9, #e2e2e2 55%, #dcdcdc); padding-top: 4px; }
.nav { display: flex; align-items: center; height: 27px; }
.n-back { width: 15px; height: 12px; margin-left: 10px; }
.n-fwd { width: 15px; height: 12px; margin-left: 14px; }
.n-rel { width: 16px; height: 16px; margin-left: 13px; }
.omni { width: 1238px; height: 27px; margin-left: 12px; padding: 0 4px 0 6px; display: flex; align-items: center; background: #fff; border: 1px solid #b4b4b4; border-radius: 2px; }
.o-doc { width: 12px; height: 16px; }
.url { margin-left: 7px; font-size: 15px; letter-spacing: .09px; line-height: 24px; color: #111; white-space: nowrap; }
.two .url { letter-spacing: .065px; }
.o-star { width: 18px; height: 18px; margin-left: auto; }
.n-menu { width: 13px; height: 14px; margin-left: 11px; }
.marks { display: flex; align-items: center; height: 28px; padding-left: 8px; font-size: 11.5px; color: #222; }
.m-apps { width: 13px; height: 13px; margin-right: 7px; }
.m-yt { width: 16px; height: 12px; margin: 0 5px 0 12px; }

/* Buttons */
.btn { display: flex; flex: none; align-items: center; justify-content: center; font-size: 14px; color: #444; background: linear-gradient(#fff, #e0e0e0); border: 1px solid #ccc; border-radius: 4px; box-shadow: 0 1px 2px rgba(0,0,0,.15); white-space: nowrap; }
.btn.hot { background: #ff5500; border-color: #ff5500; color: #fff; }

/* Screen 1 */
.page1 { position: relative; height: 643px; flex: none; display: flex; overflow: hidden; background: #323232; padding-left: 105px; }
.panel1 { width: 1141px; height: 643px; flex: none; overflow: hidden; border: 1px solid #000; border-bottom: 0; border-radius: 4px 4px 0 0; }
.ph1 { height: 59px; padding-left: 15px; background: #331100; color: #3a3432; font-size: 18px; font-weight: 400; line-height: 59px; }
.pb1 { display: flex; align-items: flex-start; padding: 16px 0 0 15px; }
.list1 { width: 805px; height: 243px; border: 1px solid #000; border-radius: 4px; }
.row1 { height: 121px; display: flex; align-items: flex-start; border-bottom: 1px solid #000; }
.row1.last { border: 0; }
.row1 .chk { width: 12px; height: 12px; margin: 54px 0 0 15px; border: 1px solid #1c1c1c; border-radius: 2px; }
.row1 .pic { width: 100px; height: 100px; margin: 10px 34px 0 55px; border: 1px solid #252525; padding: 1px; }
.row1 .pic svg { width: 16px; height: 16px; }
.row1 .cell { margin-top: 47px; font-size: 10px; font-weight: 700; line-height: 20px; letter-spacing: -.3px; color: #222; }
.row1 .c1, .row1 .c2 { width: 134px; }
.row1 .c3 { width: 174px; letter-spacing: -.240px; }
.row1 .more { display: block; width: 64px; height: 22px; margin-top: 6px; border: 1.500px solid #1e2b42; border-radius: 3px; font-size: 11px; font-weight: 400; line-height: 18px; text-align: center; text-decoration: underline; color: #0d1b29; letter-spacing: -.330px; }
.pair { display: flex; width: 128px; height: 22px; margin-top: 45px; padding-left: 6px; background: #331100; border-radius: 4px; color: #4a3d37; font-size: 12px; font-weight: 700; line-height: 21px; }
.p-res { width: 77px; letter-spacing: -.140px; }
.p-can { letter-spacing: -.220px; }
.up { width: 0; height: 0; border: 4px solid transparent; border-top: 0; border-bottom: 4px solid #999; }
.down { width: 0; height: 0; border: 4px solid transparent; border-bottom: 0; border-top: 4px solid #444; }
.sb1 { width: 16px; height: 567px; margin-left: 16px; padding: 7px 0 0 4px; background: #303030; }
.sb1 .up { display: block; border-bottom-color: #1a1a1a; }
.side1 { width: 143px; height: 131px; margin-left: 15px; padding: 30px 5px 0; border: 2px solid #000; }
.side1b { height: 67px; background: #331100; border-radius: 4px; display: flex; flex-direction: column; align-items: center; font-size: 14px; color: #46362f; }
.side1b span { line-height: 33px; }
.scroll { margin-left: auto; width: 17px; display: flex; flex-direction: column; align-items: center; background: #f1f1f1; padding: 7px 0 6px; }
.scroll .thumb { width: 13px; height: 550px; margin-top: 6px; background: #bcbcbc; border: 1px solid #a8a8a8; }
.scroll .up { border-bottom-color: #a3a3a3; }
.scroll .down { margin-top: auto; }
.shade { position: absolute; left: 774px; top: 193px; width: 287px; height: 321px; background: #323232; border-top: 3px solid #000; border-bottom: 3px solid #000; }
.shade-tail { position: absolute; left: 1061px; top: 196px; width: 18px; height: 318px; background: #323232; border-bottom: 2px solid #000; }
.modal { position: absolute; left: 270px; top: 193px; width: 504px; height: 321px; background: #fff; border: 3px solid #000; padding-top: 19px; }
.mhead { display: flex; align-items: flex-start; justify-content: space-between; padding: 0 15px 0 31px; height: 40px; }
.mhead h2 { font-size: 18px; font-weight: 400; line-height: 31px; letter-spacing: -.050px; color: #333; }
.mx { width: 24px; height: 22px; padding: 3px 5px; background: #ff5500; border-radius: 3px; }
.mx svg { width: 14px; height: 14px; }
.fields { display: grid; grid-template-columns: 63px 292px; grid-template-rows: 21px 21px 54px; row-gap: 9px; padding-left: 67px; font-size: 14px; line-height: 21px; color: #333; }
.fields dt { font-weight: 700; letter-spacing: -.040px; }
.fields dd { letter-spacing: .180px; }
.fields .msg { height: 54px; border: 1px solid #ccc; border-radius: 4px; background: #eee; padding: 6px 12px; color: #555; box-shadow: inset 0 1px 1px rgba(0,0,0,.08); }
.mbtns { display: flex; align-items: flex-start; padding: 74px 0 0 114px; }
.m-can { width: 67px; height: 30px; margin-top: 2px; font-size: 11.500px; letter-spacing: -.650px; color: #666; }
.m-view { width: 96px; height: 34px; margin-left: 13px; }
.m-res { width: 67px; height: 30px; margin: 3px 0 0 11px; padding-left: 3px; font-size: 11.500px; letter-spacing: -.850px; }

/* Screen 2 */
.page2 { height: 643px; flex: none; padding-top: 94px; }
.panel2 { width: 847px; height: 327px; margin-left: 251px; border: 1px solid #ddd; border-radius: 4px; box-shadow: 0 1px 1px rgba(0,0,0,.05); overflow: hidden; }
.ph2 { height: 38px; padding-left: 15px; background: #ff5500; border-bottom: 1px solid #ddd; color: #fff; font-size: 16px; font-weight: 400; line-height: 37px; letter-spacing: -.050px; }
.pb2 { display: flex; flex-direction: column; gap: 3px; padding: 18px 15px 0; }
.app { display: flex; height: 124px; border: 2px solid #000; padding-left: 30px; font-size: 14px; font-weight: 700; line-height: 20px; letter-spacing: .090px; }
.who { width: 195px; padding-top: 15px; }
.desc { width: 345px; padding-top: 15px; }
.app .v { margin-top: 5px; }
.who .v { letter-spacing: .150px; }
.desc .sch { letter-spacing: .130px; }
.desc a { color: #337ab7; letter-spacing: -.130px; }
.app .btn { width: 96px; height: 34px; margin: 37px 19px 0 0; font-weight: 400; letter-spacing: 0; }
.page2 hr { width: 825px; margin: 40px 0 0 263px; border: 0; border-top: 1px solid #eee; }
.pager { display: flex; width: 232px; height: 34px; margin: 40px 0 0 538px; border: 1px solid #ddd; border-radius: 4px; font-size: 14px; line-height: 33px; color: #337ab7; }
.pager a { flex: 1; text-align: center; }
.pager a + a { border-left: 1px solid #ddd; }

/* Screen 3 */
.vtitle { position: relative; display: flex; height: 22px; flex: none; background: #fcfcfc; padding-left: 2px; }
.vtitle > span { margin-left: 466px; font-size: 14px; letter-spacing: .090px; line-height: 23px; color: #222; white-space: nowrap; }
.v-ico { width: 16px; height: 14px; margin-top: 4px; }
.vmenu { display: flex; align-items: center; height: 31px; flex: none; padding: 0 10px 2px 17px; background: linear-gradient(#fbfdff, #e6f0f8 46%, #d6e4f2 50%, #d9e6f4); border: 1px solid #9db3cd; border-top: 2px solid #9db3cd; font-size: 11.500px; color: #1e395b; letter-spacing: -.2px; }
.vmenu > i { width: 0; height: 0; margin-top: -3px; border: 4px solid transparent; border-bottom: 0; border-top: 5px solid #1e395b; }
.vmenu span { white-space: nowrap; }
.m1 { width: 33px; } .m2 { width: 36px; margin-left: 19px; } .m3 { width: 62px; margin-left: 20px; } .m4 { width: 36px; } .m5 { width: 39px; margin-left: 16px; }
.help { position: relative; width: 16px; height: 16px; margin: -3px 0 0 auto; }
.help svg { width: 16px; height: 16px; }
.help b { position: absolute; inset: 0; text-align: center; font-size: 11px; line-height: 16px; color: #fff; }
.vbody { height: 618px; flex: none; background: #eef2fb; border-bottom: 1px solid #cfcfcf; padding-left: 87px; overflow: hidden; }
.photo { width: 1192px; height: 617px; background: #fff; overflow: hidden; }
.shrunk { height: 51px; overflow: hidden; display: flex; align-items: flex-end; }
.shrunk .toolbar { zoom: .8875; width: 1343px; }
.panel3 { width: 1012px; height: 566px; margin-left: 93px; overflow: hidden; border: 1px solid #333; border-bottom: 0; border-radius: 4px 4px 0 0; }
.ph3 { height: 53px; padding-left: 13px; background: #ff5500; border-bottom: 1px solid #e9a37c; color: #fff; font-size: 16px; font-weight: 400; line-height: 52px; letter-spacing: -.050px; }
.pb3 { display: flex; align-items: flex-start; padding: 14px 0 0 13px; }
.left3 { width: 716px; }
.list3 { width: 716px; height: 217px; border: 1px solid #444; border-radius: 4px; }
.row3 { height: 108px; display: flex; align-items: flex-start; border-bottom: 1px solid #222; }
.row3.last { border: 0; }
.row3 .chk { width: 11px; height: 11px; margin: 48px 0 0 13px; border: 1px solid #aaa; border-radius: 2px; background: #dedede; }
.row3 .pic { width: 89px; height: 89px; margin: 8px 30px 0 49px; border: 1px solid #c8c8c8; padding: 1px; }
.row3 .pic svg { width: 14px; height: 14px; }
.row3 .cell { margin-top: 40px; font-size: 9px; font-weight: 700; line-height: 20px; letter-spacing: -.3px; color: #aeaeae; }
.row3 .c1 { width: 118px; } .row3 .c2 { width: 119px; } .row3 .c3 { width: 125px; letter-spacing: -.240px; }
.row3 .more { display: block; margin: 7px 0 0 7px; font-size: 10px; font-weight: 400; line-height: 14px; letter-spacing: -.4px; color: #3f73aa; }
.can3 { width: 66px; height: 30px; margin: 39px 13px 0 0; font-size: 11.500px; letter-spacing: -.700px; }
.res3 { width: 67px; height: 30px; margin-top: 39px; padding-left: 3px; font-size: 11.500px; letter-spacing: -.850px; }
.last .can3 { width: 64px; height: 26px; margin: 35px 12px 0 3px; font-size: 11px; letter-spacing: -.650px; color: #555; }
.last .res3 { width: 65px; height: 27px; margin-top: 34px; font-size: 11px; letter-spacing: -.750px; }
.sb3 { width: 15px; height: 498px; margin-left: 14px; padding: 6px 0 0 4px; background: #f0f0f0; }
.sb3 .up { display: block; }
.side3 { display: flex; flex-direction: column; gap: 17px; margin: 64px 0 0 64px; }
.side3 .btn { width: 119px; height: 30px; font-size: 12.500px; }
.note { margin-top: 45px; margin-left: -2px; font-size: 21px; line-height: 30px; letter-spacing: -.110px; color: #000; }
.vbar { height: 57px; flex: none; background: #fbfbfb; padding: 16px 0 0 481px; }
.pill { display: flex; align-items: center; width: 403px; height: 32px; border: 1px solid #b3b7c0; border-radius: 16px; background: #f3f5fa; padding-left: 29px; }
.pill i { width: 0; height: 0; margin-left: 5px; border: 3.500px solid transparent; border-bottom: 0; border-top: 4px solid #1450b8; }
.pill .z { width: 18px; height: 18px; }
.pill .fit { width: 18px; height: 16px; margin-left: 29px; }
.step { width: 52px; height: 25px; margin-left: 23px; display: flex; align-items: center; justify-content: center; border: 1px solid #555b66; border-radius: 8px 0 0 8px; background: linear-gradient(#e3e9f1, #cdd7e2 48%, #a9b4c1 52%, #dbe3ec); }
.step svg { width: 14px; height: 11px; }
.play { position: relative; width: 46px; height: 48px; margin: 0 -3px; }
.step.next { margin-left: 0; border-radius: 0 8px 8px 0; }
.ccw { width: 14px; height: 16px; margin-left: 18px; }
.cw { width: 14px; height: 16px; margin-left: 19px; }
.pill s { width: 1px; height: 19px; margin: 0 14px 0 17px; background: #bbb; }
.del { width: 15px; height: 14px; }

/* Taskbar */
.taskbar { display: flex; height: 40px; flex: none; gap: 2px; background: linear-gradient(#979797, #8e8e8e); border-top: 1px solid #7c7c7c; }
.orb { width: 37px; height: 37px; margin: 1px 11px 0 9px; }
.task { position: relative; width: 60px; height: 39px; flex: none; display: flex; align-items: center; justify-content: center; background: #a2a2a2; border: 1px solid #6e6e6e; box-shadow: inset 0 0 0 1px #bfbfbf; }
.task svg { width: 31px; height: 31px; }
.task.on { background: linear-gradient(#bcbcbc, #cdcdcd); box-shadow: inset 0 0 0 1px #f4f4f4; }
.task.plain { background: none; border-color: transparent; box-shadow: none; }
.task.stack { padding-right: 8px; }
.task.stack::after { content: ""; position: absolute; right: 3px; top: 0; width: 5px; height: 37px; border: 1px solid #737373; border-width: 0 1px; box-shadow: inset 1px 0 0 #bdbdbd; }
.task.stack2 { padding-right: 4px; }
.task.stack2::after { content: ""; position: absolute; right: 3px; top: 0; width: 2px; height: 37px; border-left: 1px solid #6e6e6e; }
.task b { position: absolute; line-height: 1; }
.task .w { left: 12px; top: 11px; font-size: 14px; color: #fff; }
.task .s { left: 22px; top: 5px; font-size: 18px; color: #f29a3a; }
.task .k { left: 21px; top: 7px; font-size: 22px; color: #fff; }
.task .n { left: 37px; top: 24px; font-size: 9px; color: #222; }
.tray { width: 86px; height: 24px; margin: 9px 0 0 auto; }
.clock { width: 56px; margin: 3px 20px 0 12px; display: flex; flex-direction: column; align-items: center; font-size: 11.500px; line-height: 17px; color: #fff; }
.clock span + span { font-size: 11px; }
```
